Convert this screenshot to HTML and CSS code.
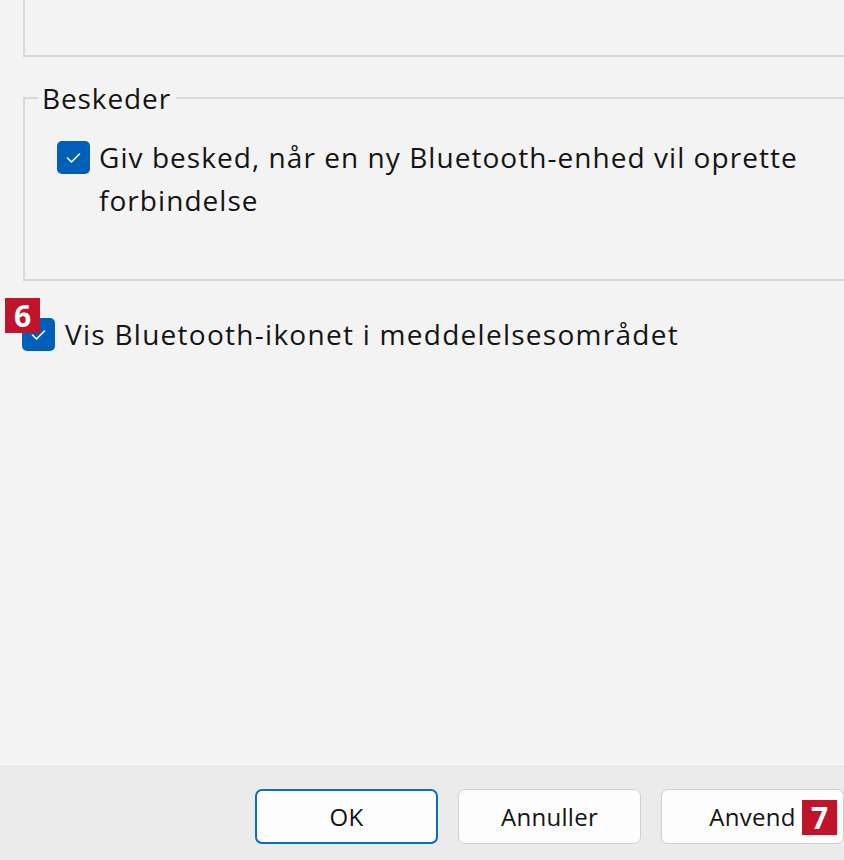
FILE: index.html
```html
<!DOCTYPE html>
<html lang="da">
<head>
<meta charset="utf-8">
<link rel="stylesheet" href="styles.css">
</head>
<body>
<div class="page">
  <main class="content">
    <div class="group-top"></div>
    <fieldset class="group">
      <legend class="legend">Beskeder</legend>
      <label class="check-row check-indent">
        <span class="box"><svg viewBox="0 0 33 33" width="33" height="33"><path d="M10.5 17 L14.5 21 L22.5 13" fill="none" stroke="#ffffff" stroke-width="1.6" stroke-linecap="round" stroke-linejoin="round"/></svg></span>
        <span class="label-text">Giv besked, når en ny Bluetooth-enhed vil oprette forbindelse</span>
      </label>
    </fieldset>
    <div class="check-row check-main">
      <span class="badge badge-six">6</span>
      <span class="box"><svg viewBox="0 0 33 33" width="33" height="33"><path d="M10.5 17 L14.5 21 L22.5 13" fill="none" stroke="#ffffff" stroke-width="1.6" stroke-linecap="round" stroke-linejoin="round"/></svg></span>
      <span class="label-text">Vis Bluetooth-ikonet i meddelelsesområdet</span>
    </div>
  </main>
  <footer class="footer">
    <button class="btn btn-default">OK</button>
    <button class="btn">Annuller</button>
    <button class="btn btn-apply">Anvend<span class="badge badge-seven">7</span></button>
  </footer>
</div>
</body>
</html>
```
FILE: styles.css
```css
* { box-sizing: border-box; }
html, body {
  margin: 0;
  padding: 0;
  background: #f3f3f3;
  overflow: hidden;
}
body {
  font-family: "Open Sans", "Noto Sans", sans-serif;
  color: #141414;
}
.page {
  width: 844px;
  height: 860px;
  display: flex;
  flex-direction: column;
}
.content {
  height: 766px;
  position: relative;
}
.group-top {
  margin-left: 23px;
  width: 860px;
  height: 57px;
  margin-top: 0;
  border-left: 2px solid #d8d8d8;
  border-bottom: 2px solid #d8d8d8;
}
.group {
  margin: 24px 0 0 23px;
  width: 860px;
  height: 200px;
  padding: 0;
  border: 2px solid #d8d8d8;
  border-right: none;
}
.legend {
  margin-left: 13px;
  padding: 0 5px 0 4px;
  font-size: 28px;
  line-height: 34px;
  letter-spacing: 0.9px;
  color: #141414;
}
.check-row {
  display: flex;
  align-items: flex-start;
  font-size: 28px;
  line-height: 43px;
}
.check-indent {
  margin: 21px 0 0 32px;
  width: 780px;
}
.box {
  flex: 0 0 33px;
  width: 33px;
  height: 33px;
  border-radius: 5px;
  background: #005fb8;
  margin-top: 5px;
  display: flex;
}
.label-text {
  margin-left: 9px;
  letter-spacing: 1.05px;
}
.check-main {
  margin: 32px 0 0 22px;
  position: relative;
}
.check-main .label-text {
  margin-left: 10px;
  letter-spacing: 1.27px;
}
.badge {
  position: absolute;
  background: #c0142b;
  color: #ffffff;
  font-family: "Open Sans", sans-serif;
  font-weight: 700;
  font-size: 30px;
  width: 35px;
  height: 35px;
  line-height: 35px;
  text-align: center;
  letter-spacing: 0;
}
.badge-six {
  left: -17px;
  top: -15px;
}
.footer {
  height: 94px;
  background: #ebebeb;
  border-top: 1px solid #e3e3e3;
  display: flex;
  justify-content: flex-end;
  align-items: flex-start;
  gap: 20px;
  padding-top: 22px;
  padding-right: 0;
}
.btn {
  position: relative;
  width: 183px;
  height: 55px;
  background: #fdfdfd;
  border: 1px solid #cfcfcf;
  border-radius: 7px;
  font-family: "Open Sans", sans-serif;
  font-size: 24px;
  color: #141414;
  padding: 0;
  letter-spacing: 0.3px;
}
.btn-default {
  border: 2px solid #0a6cc4;
}
.badge-seven {
  right: 6px;
  top: 10px;
}
```
